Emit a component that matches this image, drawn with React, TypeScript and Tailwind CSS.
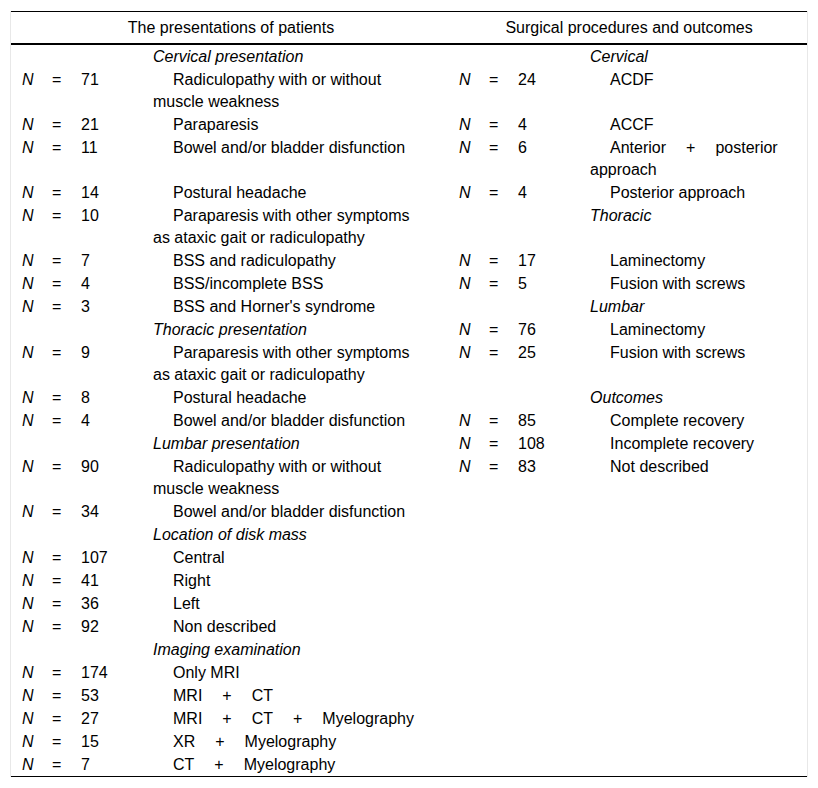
import type { ReactNode } from 'react';

type Item = { n: string; text: ReactNode };
type Cell = string | Item | null;

// "A + B" with the wide gaps round the plus sign
const plus = (...parts: string[]) => (
    <>
        {parts.map((p, i) => (
            <span key={i}>
                {i > 0 && <span className="mx-[20px]">+</span>}
                {p}
            </span>
        ))}
    </>
);

const rows: [Cell, Cell][] = [
    ['Cervical presentation', 'Cervical'],
    [{ n: '71', text: 'Radiculopathy with or without muscle weakness' }, { n: '24', text: 'ACDF' }],
    [{ n: '21', text: 'Paraparesis' }, { n: '4', text: 'ACCF' }],
    [{ n: '11', text: 'Bowel and/or bladder disfunction' }, { n: '6', text: <>{plus('Anterior', 'posterior')} approach</> }],
    [{ n: '14', text: 'Postural headache' }, { n: '4', text: 'Posterior approach' }],
    [{ n: '10', text: 'Paraparesis with other symptoms as ataxic gait or radiculopathy' }, 'Thoracic'],
    [{ n: '7', text: 'BSS and radiculopathy' }, { n: '17', text: 'Laminectomy' }],
    [{ n: '4', text: 'BSS/incomplete BSS' }, { n: '5', text: 'Fusion with screws' }],
    [{ n: '3', text: "BSS and Horner's syndrome" }, 'Lumbar'],
    ['Thoracic presentation', { n: '76', text: 'Laminectomy' }],
    [{ n: '9', text: 'Paraparesis with other symptoms as ataxic gait or radiculopathy' }, { n: '25', text: 'Fusion with screws' }],
    [{ n: '8', text: 'Postural headache' }, 'Outcomes'],
    [{ n: '4', text: 'Bowel and/or bladder disfunction' }, { n: '85', text: 'Complete recovery' }],
    ['Lumbar presentation', { n: '108', text: 'Incomplete recovery' }],
    [{ n: '90', text: 'Radiculopathy with or without muscle weakness' }, { n: '83', text: 'Not described' }],
    [{ n: '34', text: 'Bowel and/or bladder disfunction' }, null],
    ['Location of disk mass', null],
    [{ n: '107', text: 'Central' }, null],
    [{ n: '41', text: 'Right' }, null],
    [{ n: '36', text: 'Left' }, null],
    [{ n: '92', text: 'Non described' }, null],
    ['Imaging examination', null],
    [{ n: '174', text: 'Only MRI' }, null],
    [{ n: '53', text: plus('MRI', 'CT') }, null],
    [{ n: '27', text: plus('MRI', 'CT', 'Myelography') }, null],
    [{ n: '15', text: plus('XR', 'Myelography') }, null],
    [{ n: '7', text: plus('CT', 'Myelography') }, null],
];

const td = 'align-top py-[0.5px] p-0';

const Half = ({ cell, left }: { cell: Cell; left: boolean }) => {
    const first = left ? 'pl-[11px]' : '';
    const last = left ? 'pr-[41px]' : 'pr-[17px]';
    if (cell === null) {
        return (
            <>
                <td className={`${td} ${first}`} />
                <td className={td} />
                <td className={td} />
                <td className={`${td} ${last}`} />
            </>
        );
    }
    if (typeof cell === 'string') {
        return (
            <>
                <td className={`${td} ${first}`} />
                <td className={td} />
                <td className={td} />
                <td className={`${td} ${last} italic`}>{cell}</td>
            </>
        );
    }
    return (
        <>
            <td className={`${td} ${first} italic`}>N</td>
            <td className={td}>=</td>
            <td className={td}>{cell.n}</td>
            <td className={`${td} ${last} indent-[20px]`}>{cell.text}</td>
        </>
    );
};

export default function App() {
    return (
        <div className="bg-white min-h-screen pt-[11px] font-['Liberation_Sans',Arial,sans-serif] text-[16px] leading-[22px] text-black">
            <div className="ml-[10px] w-[798px] border-x border-[#e8e8e8]">
                <table className="w-full table-fixed border-separate border-spacing-0 border-t border-b border-black">
                    <colgroup>
                        <col className="w-[41px]" />
                        <col className="w-[29px]" />
                        <col className="w-[72px]" />
                        <col className="w-[306px]" />
                        <col className="w-[30px]" />
                        <col className="w-[29px]" />
                        <col className="w-[72px]" />
                        <col className="w-[217px]" />
                    </colgroup>
                    <thead>
                        <tr>
                            <th colSpan={4} className="font-normal text-center pt-[5px] pb-[4px] pr-[8px] border-b-2 border-black">
                                The presentations of patients
                            </th>
                            <th colSpan={4} className="font-normal text-center pt-[5px] pb-[4px] pr-[8px] border-b-2 border-black">
                                Surgical procedures and outcomes
                            </th>
                        </tr>
                    </thead>
                    <tbody>
                        {rows.map(([l, r], i) => (
                            <tr key={i}>
                                <Half cell={l} left />
                                <Half cell={r} left={false} />
                            </tr>
                        ))}
                    </tbody>
                </table>
            </div>
        </div>
    );
}
